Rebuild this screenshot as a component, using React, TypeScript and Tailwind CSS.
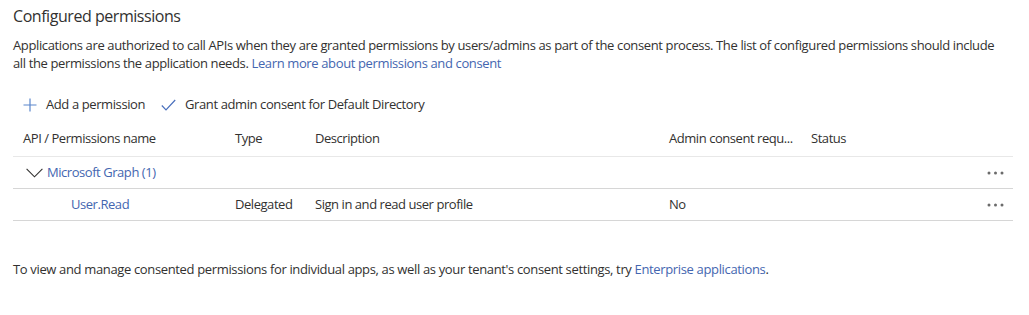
import React from "react";

const font = { fontFamily: '"Open Sans", "Noto Sans", sans-serif' };

function Dots() {
  return (
    <svg width="17" height="4" viewBox="0 0 17 4" className="text-[#6b6b6b]">
      <circle cx="2" cy="2" r="1.5" fill="currentColor" />
      <circle cx="8.5" cy="2" r="1.5" fill="currentColor" />
      <circle cx="15" cy="2" r="1.5" fill="currentColor" />
    </svg>
  );
}

export default function App() {
  return (
    <div
      className="w-[1029px] h-[315px] bg-white text-[#323130] pl-[13px] pr-[16px] pt-[5px] overflow-hidden"
      style={font}
    >
      <h2 className="text-[16px] leading-[22px] font-normal tracking-[-0.45px]">Configured permissions</h2>
      <p className="mt-[9px] text-[13px] leading-[18px] tracking-[-0.37px] w-[1000px]">
        Applications are authorized to call APIs when they are granted permissions by users/admins as part of the consent process. The list of configured permissions should include
        <br />
        all the permissions the application needs.{" "}
        <span className="text-[#4466b0]">Learn more about permissions and consent</span>
      </p>

      <div className="mt-[17px] h-[32px] flex items-center text-[13px] tracking-[-0.4px]">
        <div className="flex items-center pl-[10px]">
          <svg width="14" height="14" viewBox="0 0 14 14" className="text-[#5a86cc]">
            <path d="M7 0.5v13M0.5 7h13" stroke="currentColor" strokeWidth="1.2" fill="none" />
          </svg>
          <span className="ml-[9px]">Add a permission</span>
        </div>
        <div className="flex items-center ml-[16px]">
          <svg width="15" height="12" viewBox="0 0 15 12" className="text-[#4a70bd]">
            <path d="M0.8 6.5l4.2 4.3L14.2 1" stroke="currentColor" strokeWidth="1.2" fill="none" />
          </svg>
          <span className="ml-[9px]">Grant admin consent for Default Directory</span>
        </div>
      </div>

      <div className="w-[1000px] text-[13px] tracking-[-0.45px]">
        <div className="h-[36px] pt-[1px] flex items-center border-b border-[#e8e8e8]">
          <div className="w-[212px] pl-[10px]">API / Permissions name</div>
          <div className="w-[80px] pl-[10px]">Type</div>
          <div className="w-[354px] pl-[10px]">Description</div>
          <div className="w-[142px] pl-[10px]">Admin consent requ...</div>
          <div className="pl-[10px]">Status</div>
        </div>
        <div className="h-[32px] flex items-center border-b border-[#d6d6d6]">
          <div className="flex items-center pl-[13px] flex-1">
            <svg width="17" height="10" viewBox="0 0 17 10" className="text-[#323130]">
              <path d="M0.6 0.8L8.5 8.8L16.4 0.8" stroke="currentColor" strokeWidth="1.1" fill="none" />
            </svg>
            <span className="ml-[4px] text-[#4466b0]">Microsoft Graph (1)</span>
          </div>
          <div className="w-[26px] flex items-center"><Dots /></div>
        </div>
        <div className="h-[32px] flex items-center border-b border-[#d6d6d6]">
          <div className="w-[212px] pl-[58px] text-[#4466b0]">User.Read</div>
          <div className="w-[80px] pl-[10px]">Delegated</div>
          <div className="w-[354px] pl-[10px]">Sign in and read user profile</div>
          <div className="w-[142px] pl-[10px]">No</div>
          <div className="flex-1" />
          <div className="w-[26px] flex items-center"><Dots /></div>
        </div>
      </div>

      <p className="mt-[40px] text-[13px] leading-[17px] tracking-[-0.35px]">
        To view and manage consented permissions for individual apps, as well as your tenant's consent settings, try{" "}
        <span className="text-[#4466b0]">Enterprise applications</span>.
      </p>
    </div>
  );
}
